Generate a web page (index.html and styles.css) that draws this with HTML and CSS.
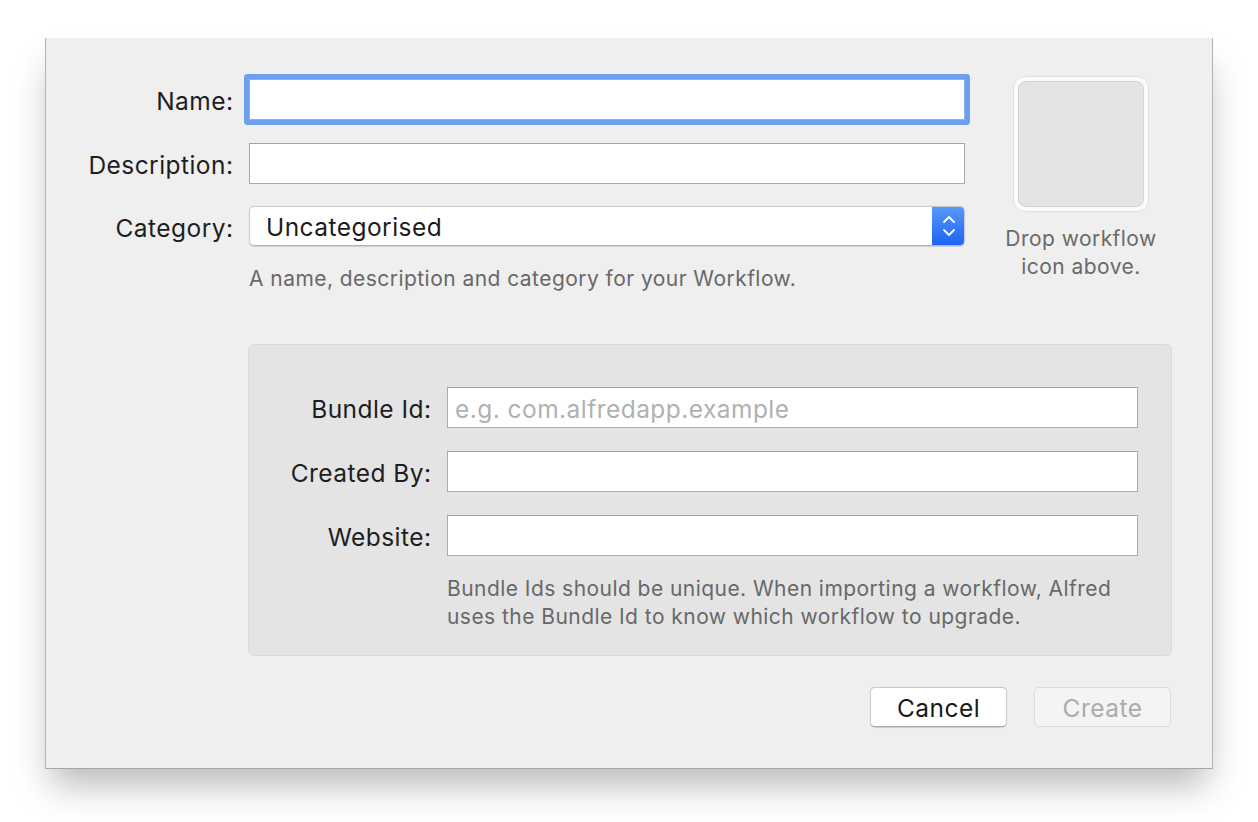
FILE: index.html
```html
<!DOCTYPE html>
<html>
<head>
<meta charset="utf-8">
<link rel="stylesheet" href="styles.css">
</head>
<body>
<div class="window">
  <div class="top">
    <div class="form">
      <div class="row row-name">
        <span class="label">Name:</span>
        <div class="field focused"></div>
      </div>
      <div class="row row-desc">
        <span class="label">Description:</span>
        <div class="field"></div>
      </div>
      <div class="row row-cat">
        <span class="label">Category:</span>
        <div class="select">
          <span class="select-text">Uncategorised</span>
          <span class="stepper">
            <svg width="16" height="28" viewBox="0 0 16 28">
              <path d="M3 10 L8 5 L13 10" fill="none" stroke="#fff" stroke-width="1.8" stroke-linecap="round" stroke-linejoin="round"/>
              <path d="M3 18 L8 23 L13 18" fill="none" stroke="#fff" stroke-width="1.8" stroke-linecap="round" stroke-linejoin="round"/>
            </svg>
          </span>
        </div>
      </div>
      <p class="hint top-hint">A name, description and category for your Workflow.</p>
    </div>
    <div class="iconcol">
      <div class="well"><div class="well-inner"></div></div>
      <p class="well-text">Drop workflow<br>icon above.</p>
    </div>
  </div>

  <div class="meta">
    <div class="mrow">
      <span class="label">Bundle Id:</span>
      <div class="field"><span class="placeholder">e.g. com.alfredapp.example</span></div>
    </div>
    <div class="mrow">
      <span class="label">Created By:</span>
      <div class="field"></div>
    </div>
    <div class="mrow">
      <span class="label">Website:</span>
      <div class="field"></div>
    </div>
    <p class="hint meta-hint">Bundle Ids should be unique. When importing a workflow, Alfred<br>uses the Bundle Id to know which workflow to upgrade.</p>
  </div>

  <div class="buttons">
    <button class="btn btn-cancel">Cancel</button>
    <button class="btn btn-create">Create</button>
  </div>
</div>
</body>
</html>
```

FILE: styles.css
```css
html, body {
  margin: 0;
  padding: 0;
  background: #ffffff;
}

body {
  font-family: "Inter", "Liberation Sans", sans-serif;
  color: #1e1e1e;
  width: 1258px;
  height: 822px;
  overflow: hidden;
}

.window {
  box-sizing: border-box;
  margin: 38px 0 0 45px;
  width: 1168px;
  height: 731px;
  background: #efefef;
  border-left: 1px solid #b4b4b4;
  border-right: 1px solid #b4b4b4;
  border-bottom: 1px solid #a6a6a6;
  box-shadow: 0 22px 34px -6px rgba(0, 0, 0, 0.28);
  display: flex;
  flex-direction: column;
}

.top {
  display: flex;
  align-items: flex-start;
  padding-top: 38px;
}

.form {
  display: grid;
  grid-template-columns: 187px 716px;
  column-gap: 16px;
  margin-top: 3px;
}

.row {
  display: contents;
}

.label {
  font-size: 24.5px;
  letter-spacing: 0.45px;
  text-align: right;
  align-self: center;
  color: #1e1e1e;
  white-space: nowrap;
  margin-right: -0.45px;
  padding-top: 3px;
}

.field {
  box-sizing: border-box;
  height: 41px;
  background: #ffffff;
  border: 1px solid #ababab;
  border-top-color: #a2a2a2;
  display: flex;
  align-items: center;
}

.field.focused {
  border-color: #8fb2ee;
  box-shadow: 0 0 0 5px #6d9ff1;
  border-radius: 1px;
}

.row-desc .field,
.row-desc .label {
  margin-top: 23px;
}

.row-cat .select,
.row-cat .label {
  margin-top: 22px;
}

.select {
  box-sizing: border-box;
  height: 40px;
  background: #ffffff;
  border: 1px solid #c9c9c9;
  border-bottom-color: #b2b2b2;
  border-radius: 5px;
  box-shadow: 0 0.5px 1px rgba(0, 0, 0, 0.12);
  display: flex;
  align-items: center;
  justify-content: space-between;
  overflow: hidden;
}

.select-text {
  font-size: 24.5px;
  letter-spacing: 0.45px;
  padding-left: 16px;
  padding-top: 2px;
  color: #1c1c1c;
}

.stepper {
  width: 33px;
  height: 40px;
  margin-right: -1px;
  background: linear-gradient(#5a98f9, #1b63f6);
  border-radius: 0 5px 5px 0;
  display: flex;
  align-items: center;
  justify-content: center;
}

.hint {
  margin: 0;
  font-size: 21px;
  letter-spacing: 0.45px;
  line-height: 28px;
  color: #686868;
}

.top-hint {
  grid-column: 2;
  margin-top: 19px;
}

.iconcol {
  margin-left: 48px;
  width: 136px;
  display: flex;
  flex-direction: column;
  align-items: center;
}

.well {
  box-sizing: border-box;
  width: 136px;
  height: 136px;
  background: #fbfbfb;
  border: 1px solid #e0e0e0;
  border-radius: 12px;
  padding: 4px;
}

.well-inner {
  box-sizing: border-box;
  width: 100%;
  height: 100%;
  background: #e4e4e4;
  border: 1px solid #d2d2d2;
  border-radius: 8px;
}

.well-text {
  margin: 13px 0 0;
  width: 190px;
  text-align: center;
  font-size: 21px;
  letter-spacing: 0.45px;
  line-height: 28px;
  color: #6a6a6a;
}

.meta {
  box-sizing: border-box;
  margin: 51px 0 0 202px;
  width: 924px;
  height: 312px;
  background: #e4e4e4;
  border: 1px solid #dadada;
  border-radius: 6px;
  padding: 42px 0 0 0;
  display: grid;
  grid-template-columns: 182px 691px;
  column-gap: 16px;
  align-content: start;
}

.mrow {
  display: contents;
}

.mrow + .mrow .label,
.mrow + .mrow .field {
  margin-top: 23px;
}

.meta .field {
  height: 41px;
}

.placeholder {
  font-size: 24.5px;
  letter-spacing: 0.45px;
  color: #b1b1b1;
  padding-left: 7px;
  padding-top: 2px;
}

.meta-hint {
  grid-column: 2;
  margin-top: 19px;
}

.buttons {
  display: flex;
  justify-content: flex-end;
  gap: 27px;
  margin: 31px 41px 0 0;
}

.btn {
  box-sizing: border-box;
  width: 137px;
  height: 40px;
  font-family: "Inter", "Liberation Sans", sans-serif;
  font-size: 24.5px;
  letter-spacing: 0.45px;
  border-radius: 5px;
  padding: 2px 0 0;
}

.btn-cancel {
  background: #ffffff;
  color: #1a1a1a;
  border: 1px solid #cacaca;
  border-bottom-color: #a9a9a9;
  box-shadow: 0 0.5px 1px rgba(0, 0, 0, 0.15);
}

.btn-create {
  background: #f4f4f4;
  color: #ababab;
  border: 1px solid #dcdcdc;
}
```
